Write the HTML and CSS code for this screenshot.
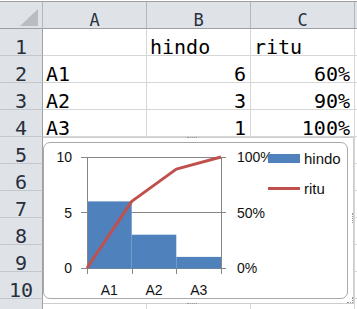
FILE: index.html
```html
<!DOCTYPE html>
<html lang="ja">

<head>
  <meta charset="UTF-8">
  <title>hindo / ritu</title>
  <link rel="stylesheet" href="styles.css">
</head>

<body>
  <div class="sheet">
    <!-- Cabeçalhos e células -->
    <div class="grid">
      <div class="corner"><span class="corner-mark"></span></div>
      <div class="col-head">A</div>
      <div class="col-head">B</div>
      <div class="col-head">C</div>
      <div class="col-head"></div>

      <div class="row-head">1</div>
      <div class="cell"></div>
      <div class="cell">hindo</div>
      <div class="cell">ritu</div>
      <div class="cell"></div>

      <div class="row-head">2</div>
      <div class="cell">A1</div>
      <div class="cell num">6</div>
      <div class="cell num">60%</div>
      <div class="cell"></div>

      <div class="row-head">3</div>
      <div class="cell">A2</div>
      <div class="cell num">3</div>
      <div class="cell num">90%</div>
      <div class="cell"></div>

      <div class="row-head">4</div>
      <div class="cell">A3</div>
      <div class="cell num">1</div>
      <div class="cell num">100%</div>
      <div class="cell"></div>

      <div class="row-head">5</div>
      <div class="cell"></div><div class="cell"></div><div class="cell"></div><div class="cell"></div>
      <div class="row-head">6</div>
      <div class="cell"></div><div class="cell"></div><div class="cell"></div><div class="cell"></div>
      <div class="row-head">7</div>
      <div class="cell"></div><div class="cell"></div><div class="cell"></div><div class="cell"></div>
      <div class="row-head">8</div>
      <div class="cell"></div><div class="cell"></div><div class="cell"></div><div class="cell"></div>
      <div class="row-head">9</div>
      <div class="cell"></div><div class="cell"></div><div class="cell"></div><div class="cell"></div>
      <div class="row-head">10</div>
      <div class="cell"></div><div class="cell"></div><div class="cell"></div><div class="cell"></div>
      <div class="row-head">11</div>
      <div class="cell"></div><div class="cell"></div><div class="cell"></div><div class="cell"></div>
    </div>

    <!-- Gráfico sobre as células -->
    <div class="chart-frame">
      <span class="grip grip-top"></span>
      <span class="grip grip-bottom"></span>
      <span class="grip grip-right"></span>
      <span class="grip grip-corner"></span>
    </div>
    <div class="chart">
      <svg width="303" height="155" viewBox="0 0 303 155">
        <!-- linhas de grade e marcas -->
        <g class="grid-lines">
          <line x1="37" y1="14.5" x2="182" y2="14.5" />
          <line x1="37" y1="69.5" x2="182" y2="69.5" />
          <line x1="37" y1="125.5" x2="182" y2="125.5" />
        </g>
        <!-- hindo -->
        <g class="bars">
          <rect x="43" y="58.4" width="44.7" height="67.1" />
          <rect x="87.7" y="91.7" width="44.6" height="33.8" />
          <rect x="132.3" y="113.9" width="44.7" height="11.6" />
        </g>
        <g class="grid-lines">
          <line x1="43.5" y1="14" x2="43.5" y2="131" />
          <line x1="88.5" y1="125" x2="88.5" y2="131" />
          <line x1="132.5" y1="125" x2="132.5" y2="131" />
          <line x1="177.5" y1="14" x2="177.5" y2="131" />
        </g>
        <!-- ritu -->
        <polyline class="ritu" points="43,125 87.7,58.4 132.3,26.1 177,14" />

        <g class="axis-left">
          <text x="28" y="19">10</text>
          <text x="28" y="74.5">5</text>
          <text x="28" y="130">0</text>
        </g>
        <g class="axis-right">
          <text x="193" y="19">100%</text>
          <text x="193" y="74.5">50%</text>
          <text x="193" y="130">0%</text>
        </g>
        <g class="axis-bottom">
          <text x="65.3" y="152">A1</text>
          <text x="110" y="152">A2</text>
          <text x="154.7" y="152">A3</text>
        </g>

        <!-- legenda -->
        <rect class="legend-bar" x="224" y="11" width="32" height="9" />
        <text class="legend-text" x="260" y="21">hindo</text>
        <line class="legend-line" x1="224" y1="45.5" x2="256" y2="45.5" />
        <text class="legend-text" x="260" y="50.5">ritu</text>
      </svg>
    </div>
  </div>
</body>

</html>
```

FILE: styles.css
```css
/* Planilha */
body {
  margin: 0;
  background: #fff;
  font-family: "DejaVu Sans Mono", monospace;
}

.sheet {
  position: relative;
  width: 357px;
  height: 308px;
  margin-top: 1px;
  border-top: 1px solid #9f9f9f;
  overflow: hidden;
}

.grid {
  display: grid;
  grid-template-columns: 43px 104px 104px 104px 1fr;
  grid-auto-rows: 27px;
}

.grid > div {
  box-sizing: border-box;
  border-right: 1px solid #d6d6d6;
  border-bottom: 1px solid #d6d6d6;
  white-space: nowrap;
}

.corner {
  display: flex;
  justify-content: flex-end;
  align-items: flex-end;
  padding: 0 4px 2px 0;
  background: #dfe3e8;
}

.grid > .corner,
.grid > .col-head {
  border-right-color: #b4b8be;
  border-bottom-color: #9c9fa4;
}

.corner-mark {
  width: 18px;
  height: 17px;
  background: #b9bcc0;
  clip-path: polygon(100% 0, 100% 100%, 0 100%);
}

.col-head {
  background: #dfe3e8;
  color: #27303c;
  font-size: 17px;
  line-height: 17px;
  padding-top: 10px;
  text-align: center;
}

.row-head {
  background: #dfe3e8;
  color: #27303c;
  font-size: 20px;
  line-height: 20px;
  padding-top: 8px;
  text-align: center;
}

.grid > .row-head {
  border-right-color: #9c9fa4;
  border-bottom-color: #c3c7cc;
}

.cell {
  color: #000;
  font-size: 20px;
  line-height: 20px;
  padding: 8px 3px 0;
}

.cell.num {
  text-align: right;
  padding-right: 4px;
}

/* Gráfico */
.chart-frame {
  position: absolute;
  left: 43px;
  top: 135px;
  width: 311px;
  height: 167px;
  box-sizing: border-box;
  border: 1px solid #cdcdcd;
  border-left: none;
  background: #fff;
}

.grip {
  position: absolute;
  width: 10px;
  height: 0;
  border-top: 1px dotted #9a9a9a;
}

.grip-top {
  left: 144px;
  top: -1px;
}

.grip-bottom {
  left: 144px;
  bottom: -1px;
}

.grip-right {
  right: 0;
  top: 75px;
  width: 0;
  height: 10px;
  border-top: none;
  border-right: 1px dotted #9a9a9a;
}

.grip-corner {
  right: 0;
  bottom: 0;
  width: 5px;
  height: 5px;
  border-top: none;
  border-right: 1px dotted #9a9a9a;
  border-bottom: 1px dotted #9a9a9a;
}

.chart {
  position: absolute;
  left: 43px;
  top: 140px;
  width: 305px;
  height: 157px;
  box-sizing: border-box;
  border: 1px solid #a9a9a9;
  border-radius: 7px;
  background: #fff;
  overflow: hidden;
}

.chart svg {
  display: block;
  font-family: "Liberation Sans", Arial, sans-serif;
  font-size: 14px;
}

.grid-lines line {
  stroke: #868686;
  stroke-width: 1;
  shape-rendering: crispEdges;
}

.bars rect,
.legend-bar {
  fill: #4f81bd;
}

.ritu {
  fill: none;
  stroke: #c0504d;
  stroke-width: 3;
  stroke-linejoin: round;
}

.legend-line {
  stroke: #c0504d;
  stroke-width: 3;
}

.axis-left text {
  text-anchor: end;
  fill: #111;
}

.axis-right text {
  fill: #111;
}

.axis-bottom text {
  text-anchor: middle;
  fill: #111;
}

.legend-text {
  font-size: 15px;
  fill: #111;
}
```
